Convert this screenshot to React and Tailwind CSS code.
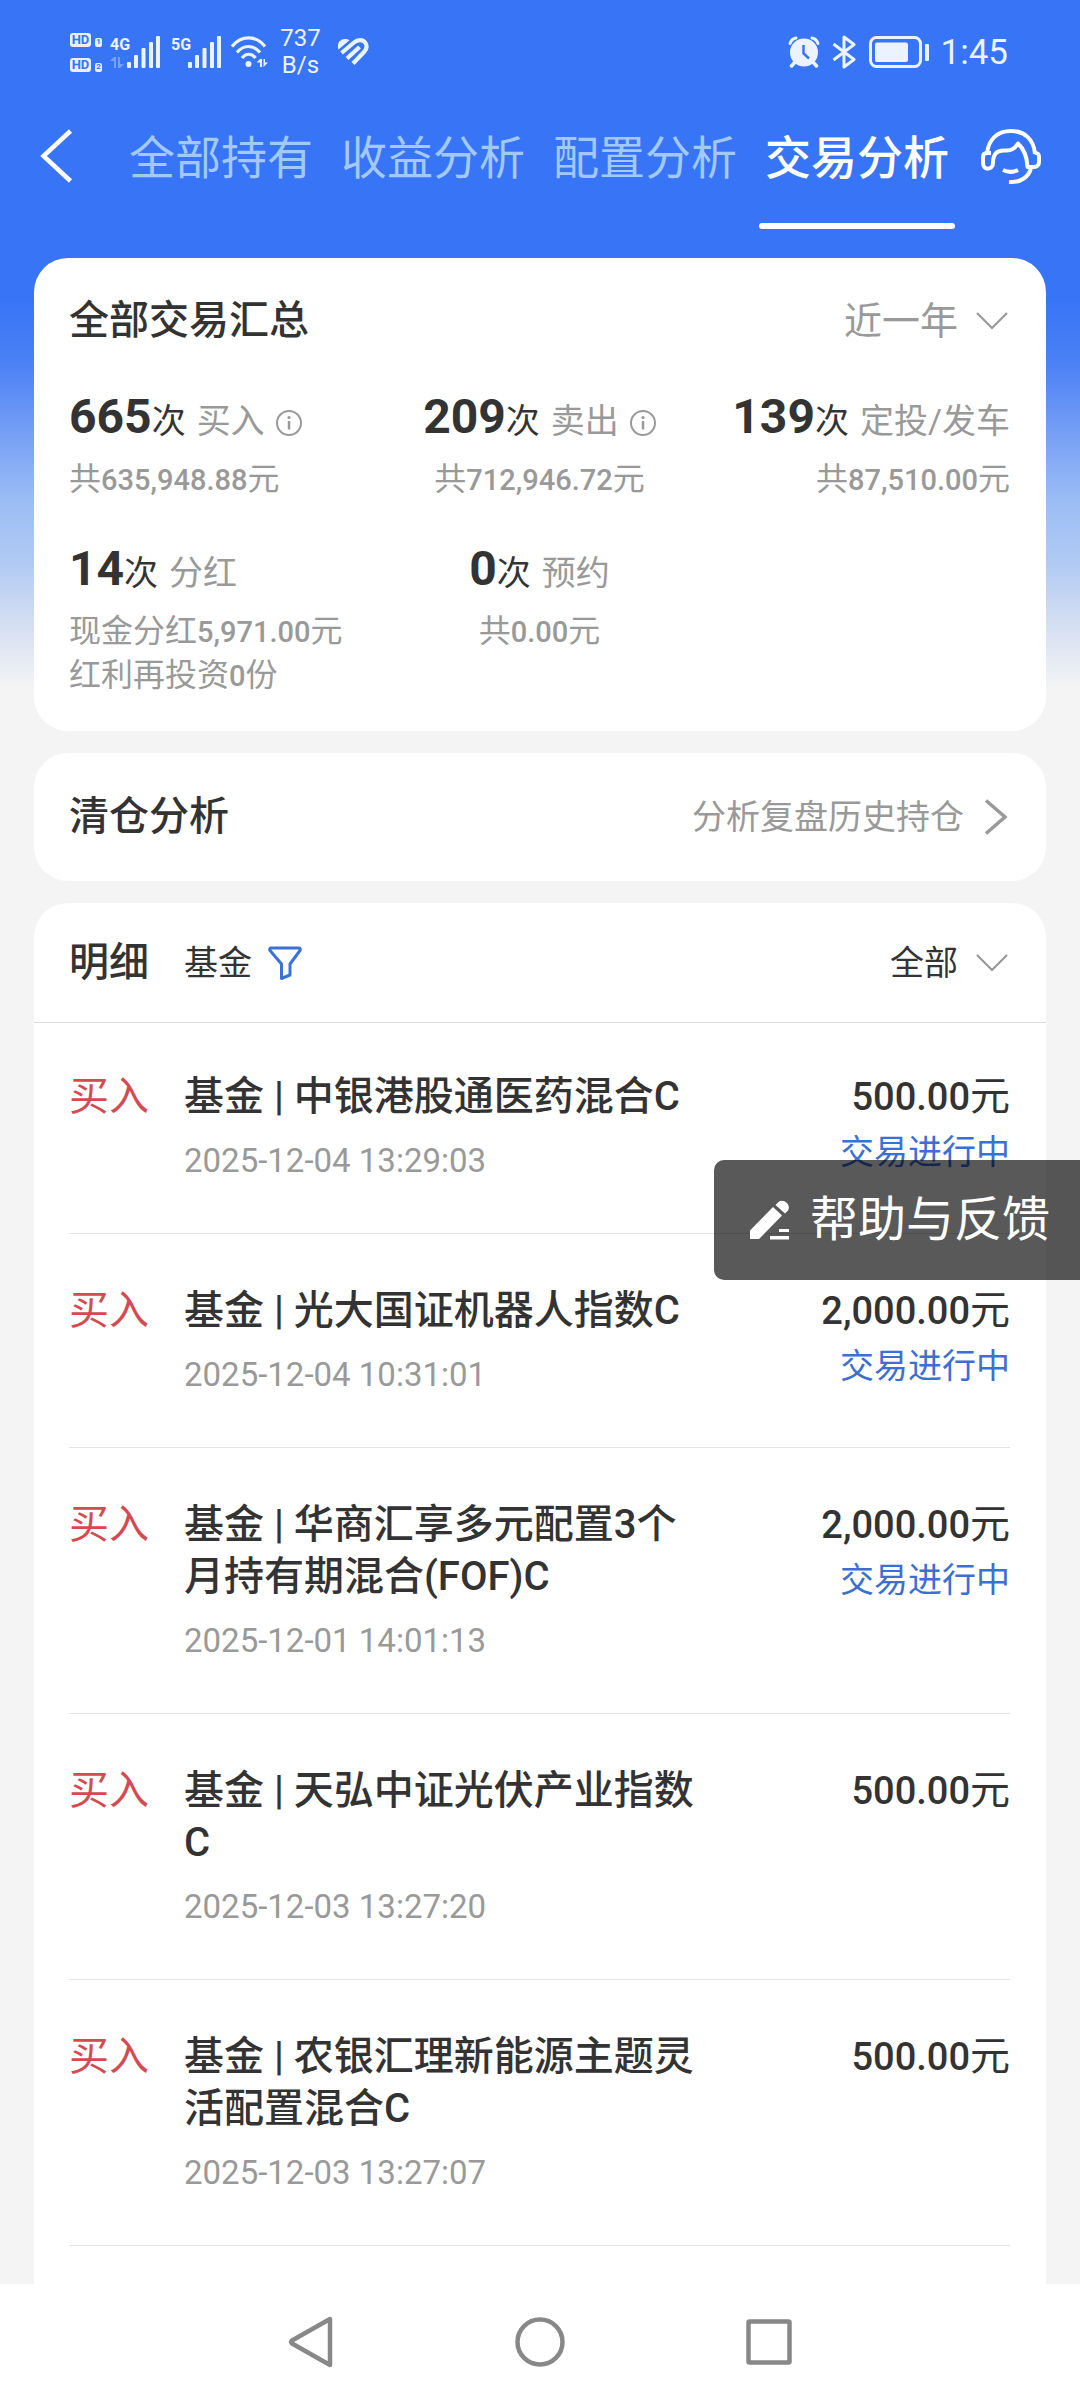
import clsx from 'clsx'

const TABS = ['全部持有', '收益分析', '配置分析', '交易分析']

const STATS = [
  { count: 665, label: '买入', info: true, lines: [['共', '635,948.88', '元']] },
  { count: 209, label: '卖出', info: true, lines: [['共', '712,946.72', '元']] },
  { count: 139, label: '定投/发车', lines: [['共', '87,510.00', '元']] },
  {
    count: 14,
    label: '分红',
    lines: [
      ['现金分红', '5,971.00', '元'],
      ['红利再投资', '0', '份'],
    ],
  },
  { count: 0, label: '预约', lines: [['共', '0.00', '元']] },
]

const TRADES = [
  { name: '中银港股通医药混合C', time: '2025-12-04 13:29:03', amount: '500.00', pending: true },
  { name: '光大国证机器人指数C', time: '2025-12-04 10:31:01', amount: '2,000.00', pending: true },
  { name: '华商汇享多元配置3个月持有期混合(FOF)C', time: '2025-12-01 14:01:13', amount: '2,000.00', pending: true },
  { name: '天弘中证光伏产业指数C', time: '2025-12-03 13:27:20', amount: '500.00' },
  { name: '农银汇理新能源主题灵活配置混合C', time: '2025-12-03 13:27:07', amount: '500.00' },
]

function SignalBars() {
  return (
    <svg className="h-8 w-[34px]" viewBox="0 0 34 32" fill="currentColor">
      <rect x="0" y="26" width="4" height="6" rx="1" />
      <rect x="7" y="19" width="4" height="13" rx="1" />
      <rect x="14.5" y="12" width="4" height="20" rx="1" />
      <rect x="22" y="6" width="4" height="26" rx="1" />
      <rect x="29" y="0" width="4" height="32" rx="1" />
    </svg>
  )
}

function DataArrows({ className }) {
  return (
    <svg className={className} viewBox="0 0 14 11" fill="currentColor">
      <path d="M4 0h2v11H4V4H0zM8 0h2v7h4l-4 4H8z" />
    </svg>
  )
}

function HdBadge({ sim }) {
  return (
    <div className="flex items-end gap-1">
      <span className="flex h-[14px] w-[21px] items-center justify-center rounded-[3px] bg-[#e6f0ff] text-[13px] leading-none font-bold text-[#3875f6]">
        HD
      </span>
      <span className="flex h-[9px] w-[7px] items-center justify-center rounded-[2px] bg-[#e6f0ff] text-[8px] leading-none font-bold text-[#3875f6]">
        {sim}
      </span>
    </div>
  )
}

function StatusBar() {
  return (
    <div className="flex h-[104px] items-center justify-between pr-[72px] pl-[70px] text-[#eaf3ff]">
      <div className="flex items-center">
        <div className="flex flex-col gap-[11px]">
          <HdBadge sim="1" />
          <HdBadge sim="2" />
        </div>
        <div className="ml-2 flex items-end">
          <div className="flex flex-col items-start gap-[4px]">
            <span className="text-[16px] leading-[17px] font-bold">4G</span>
            <DataArrows className="h-[11px] w-[14px] opacity-35" />
          </div>
          <div className="-ml-[3px]">
            <SignalBars />
          </div>
        </div>
        <div className="ml-[10px] flex items-start">
          <span className="text-[16px] leading-[17px] font-bold">5G</span>
          <div className="-ml-[3px]">
            <SignalBars />
          </div>
        </div>
        <svg className="ml-[9px] h-8 w-[37px]" viewBox="0 0 37 32" fill="none" stroke="currentColor" strokeWidth="3.2">
          <path d="M1 10.5C10-1 25-1 34 10.5" />
          <path d="M6 16.5c6.500-8 16.500-8 23 0" />
          <path d="M11 22c4-5 9.500-5 13.500 0" />
          <circle cx="17.500" cy="28" r="3" fill="currentColor" stroke="none" />
          <path d="M29 23h2v8h-2v-4.500h-3.500zM32.500 23h1.500v3.500h3l-4.500 4.500z" fill="currentColor" stroke="none" />
        </svg>
        <div className="ml-3 flex flex-col items-center text-[24px] leading-[27px]">
          <span>737</span>
          <span>B/s</span>
        </div>
        <svg className="ml-4 h-7 w-8" viewBox="0 0 32 28" fill="none" stroke="currentColor">
          <path d="M1.500 11.500C-.5 6 2.500 1 8 1c1.800 0 3.300.5 4.500 1.300z" fill="currentColor" stroke="none" />
          <path d="M4.500 15 17 4.500C20.500 1.500 26 1 28.500 5c2 3.500 1 6.500-1.500 9L16 25.500" strokeWidth="4.200" />
          <path d="M10 20.500 22.500 9" strokeWidth="4.200" />
        </svg>
      </div>
      <div className="flex items-center">
        <svg className="h-8 w-8" viewBox="0 0 32 32">
          <g fill="none" stroke="currentColor" strokeWidth="3" strokeLinecap="round">
            <path d="M2 7.500C3 4.500 5 2.500 8 2" />
            <path d="M30 7.500C29 4.500 27 2.500 24 2" />
            <path d="m7 26-3.500 4M25 26l3.500 4" strokeWidth="3.500" />
          </g>
          <circle cx="16" cy="16.500" r="14" fill="currentColor" />
          <path d="M15.500 9v8.500l5.500 5" fill="none" stroke="#3875f6" strokeWidth="2.500" />
        </svg>
        <svg className="ml-3 h-[34px] w-6" viewBox="0 0 24 34" fill="none" stroke="currentColor" strokeWidth="3" strokeLinejoin="round">
          <path d="M1.500 9 22 24.500 12 32V2l10 7.500L1.500 25" />
        </svg>
        <svg className="ml-[13px] h-8 w-[62px]" viewBox="0 0 62 32" fill="currentColor">
          <rect x="1.500" y="1.500" width="50" height="29" rx="6" fill="none" stroke="currentColor" strokeWidth="3" />
          <rect x="6" y="6.500" width="33" height="19.500" rx="2" />
          <rect x="56" y="8" width="4" height="17" rx="1" />
        </svg>
        <span className="ml-[10px] text-[35px] leading-none">1:45</span>
      </div>
    </div>
  )
}

function TopNav() {
  return (
    <nav className="flex h-[154px] items-start pr-[39px] pl-[38px]">
      <button type="button" aria-label="返回" className="mt-6 text-white">
        <svg className="h-[56px] w-9" viewBox="0 0 36 56" fill="none" stroke="currentColor" strokeWidth="4.500">
          <path d="M32.500 3 5.500 28l27 25" />
        </svg>
      </button>
      <div className="mr-8 ml-auto flex gap-7">
        {TABS.map((tab) => {
          const active = tab === '交易分析'
          return (
            <button
              key={tab}
              type="button"
              className={clsx(
                'flex flex-col items-center text-[46px] leading-[60px] whitespace-nowrap',
                active ? 'font-medium text-white' : 'text-[#a3c8fc]'
              )}
            >
              <span className="mt-6">{tab}</span>
              {active && <span className="-mx-[6px] mt-[35px] h-[6px] w-[196px] rounded-full bg-white" />}
            </button>
          )
        })}
      </div>
      <button type="button" aria-label="客服" className="mt-6 text-white">
        <svg className="h-[58px] w-[60px]" viewBox="0 0 60 58" fill="none" stroke="currentColor" strokeWidth="4" strokeLinejoin="round">
          <path d="M6 26C7 11 17 3 30 3s23 8 24 23" />
          <path d="M10 25H6c-3 0-4 2-4 4v6c0 8 10 7 10 0 0-10 5-13 12-12.500 7 .5 10-2.500 13-7C43 21 46 28 46.500 39H53c3 0 5-2 5-5v-5c0-3-1-4-4-4" />
          <path d="M50 40c-2 9-11 15-22 14" />
          <path d="M22 42c5 2.500 10 2.500 15 0" />
        </svg>
      </button>
    </nav>
  )
}

function ChevronDown() {
  return (
    <svg className="mr-[2px] h-[18px] w-8 text-[#999]" viewBox="0 0 32 18" fill="none" stroke="currentColor" strokeWidth="2.200">
      <path d="m1 1 15 15L31 1" />
    </svg>
  )
}

function InfoIcon() {
  return (
    <svg className="h-[26px] w-[26px]" viewBox="0 0 26 26" fill="none" stroke="currentColor" strokeWidth="2">
      <circle cx="13" cy="13" r="12" />
      <path d="M13 11v8.500" strokeWidth="2.500" />
      <circle cx="13" cy="7.500" r="1.600" fill="currentColor" stroke="none" />
    </svg>
  )
}

function Stat({ count, label, info, lines, align }) {
  return (
    <div className={clsx('flex flex-col', align)}>
      <div className="flex items-baseline whitespace-nowrap">
        <span className="text-[48px] leading-[56px] font-bold">{count}</span>
        <span className="text-[34px] leading-[56px]">次</span>
        <span className="ml-[11px] text-[34px] leading-[56px] text-[#999]">{label}</span>
        {info && (
          <button type="button" aria-label={`${label}说明`} className="ml-[11px] self-end pb-[13px] text-[#999]">
            <InfoIcon />
          </button>
        )}
      </div>
      <div className="mt-[9px] text-[32px] leading-[43px] text-[#999]">
        {lines.map(([before, value, after]) => (
          <p key={before}>
            {before}
            <span className="text-[29px] font-medium">{value}</span>
            {after}
          </p>
        ))}
      </div>
    </div>
  )
}

function Summary() {
  return (
    <section className="rounded-[34px] bg-white pt-[35px] pr-9 pb-[33px] pl-[35px]">
      <div className="flex items-center justify-between">
        <h2 className="text-[40px] leading-[56px] font-medium">全部交易汇总</h2>
        <button type="button" className="flex items-center gap-[18px] text-[38px] leading-[56px] text-[#999]">
          近一年
          <ChevronDown />
        </button>
      </div>
      <div className="mt-10 grid grid-cols-3 gap-y-[39px]">
        {STATS.map((stat, i) => (
          <Stat
            key={stat.label}
            {...stat}
            align={['items-start', 'items-center', 'items-end'][i % 3]}
          />
        ))}
      </div>
    </section>
  )
}

function Trade({ name, time, amount, pending }) {
  return (
    <li className="flex border-b border-[#e3e3e3] pt-[51px] pb-[50px] first:pt-12">
      <span className="w-[115px] shrink-0 text-[40px] leading-[52px] text-[#d44a50]">买入</span>
      <div className="flex-1">
        <h3 className="text-[40px] leading-[52px] font-medium">{`基金 | ${name}`}</h3>
        <time className="mt-4 block text-[33px] leading-[44px] text-[#999]">{time}</time>
      </div>
      <div className="w-[303px] shrink-0 text-right">
        <p className="text-[40px] leading-[52px]">
          <span className="text-[38px] font-medium">{amount}</span>元
        </p>
        {pending && <p className="mt-[5px] text-[34px] leading-[48px] text-[#3b6fd4]">交易进行中</p>}
      </div>
    </li>
  )
}

function Details() {
  return (
    <section className="flex-1 rounded-t-[34px] bg-white">
      <div className="flex h-[120px] items-center justify-between border-b border-[#dcdcdc] pr-9 pl-[35px]">
        <div className="flex items-center">
          <h2 className="text-[40px] leading-[56px] font-medium">明细</h2>
          <button type="button" className="ml-[35px] flex items-center gap-4 text-[34px] leading-[56px]">
            基金
            <svg className="h-[34px] w-[34px] text-[#3b72d9]" viewBox="0 0 34 34" fill="none" stroke="currentColor" strokeWidth="3" strokeLinejoin="round">
              <path d="M3 2h28c1.500 0 1.500 1.500 1 2.500L22 18v11l-8.500 3.500V18L2 4.500C1.500 3.500 1.500 2 3 2z" />
            </svg>
          </button>
        </div>
        <button type="button" className="flex items-center gap-[18px] text-[34px] leading-[56px]">
          全部
          <ChevronDown />
        </button>
      </div>
      <ul className="pr-9 pl-[35px]">
        {TRADES.map((trade) => (
          <Trade key={trade.name} {...trade} />
        ))}
      </ul>
    </section>
  )
}

function SystemNav() {
  return (
    <footer className="flex h-[116px] items-center justify-center gap-[180px] bg-white text-[#888]">
      <button type="button" aria-label="后退">
        <svg className="h-[52px] w-[46px]" viewBox="0 0 46 52" fill="none" stroke="currentColor" strokeWidth="4.500" strokeLinejoin="round">
          <path d="M42 3v46L4 27.500q-1.500-1.500 0-3z" />
        </svg>
      </button>
      <button type="button" aria-label="主屏幕">
        <svg className="h-[52px] w-[52px]" viewBox="0 0 52 52" fill="none" stroke="currentColor" strokeWidth="4.500">
          <circle cx="26" cy="26" r="22.500" />
        </svg>
      </button>
      <button type="button" aria-label="最近任务">
        <svg className="h-[46px] w-[46px]" viewBox="0 0 46 46" fill="none" stroke="currentColor" strokeWidth="4.500" strokeLinejoin="round">
          <rect x="2.500" y="2.500" width="41" height="41" rx="1" />
        </svg>
      </button>
    </footer>
  )
}

export default function App() {
  return (
    <div className="relative flex min-h-screen flex-col bg-[#f4f4f4] bg-[linear-gradient(to_bottom,#3875f6_300px,#4a80f6_360px,#749ef5_430px,#9bbdf5_500px,#afc9f3_560px,#cddaf3_610px,#e6ebf3_660px,#f4f4f4_690px)] font-[Roboto,'Noto_Sans_CJK_SC',sans-serif] text-[#333]">
      <header>
        <StatusBar />
        <TopNav />
      </header>

      <main className="flex flex-1 flex-col gap-[22px] px-[34px]">
        <Summary />

        <section className="flex h-32 items-center justify-between rounded-[34px] bg-white pr-9 pl-[35px]">
          <h2 className="text-[40px] leading-[56px] font-medium">清仓分析</h2>
          <a href="#history" className="flex items-center gap-5 text-[34px] leading-[56px] text-[#999]">
            分析复盘历史持仓
            <svg className="mr-[2px] h-9 w-6" viewBox="0 0 24 36" fill="none" stroke="currentColor" strokeWidth="3.500">
              <path d="m2 1.500 19 16.500L2 34.500" />
            </svg>
          </a>
        </section>

        <Details />
      </main>

      {/* Floating feedback entry, stuck to the right edge */}
      <button
        type="button"
        className="absolute top-[1160px] right-0 flex h-[120px] items-center gap-5 rounded-l-[10px] bg-black/65 pr-[30px] pl-9 text-[48px] leading-none text-white"
      >
        <svg className="h-10 w-10" viewBox="0 0 40 40" fill="currentColor">
          <path d="M0 39v-8.500L23 7l9 8.500L9 39z" />
          <path d="m25.500 5 3-3c5-4 13 3 9.500 8.500l-3 3z" />
          <rect x="29" y="29" width="10" height="3" />
          <rect x="20" y="36" width="19" height="3.500" />
        </svg>
        帮助与反馈
      </button>

      <SystemNav />
    </div>
  )
}
